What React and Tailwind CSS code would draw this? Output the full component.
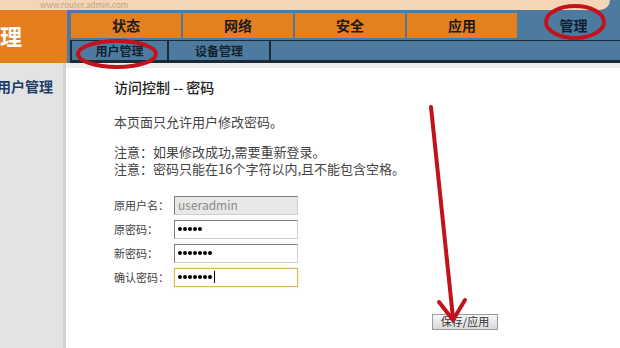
import React from "react";

const font = { fontFamily: '"Noto Sans CJK SC", "Noto Sans", sans-serif' };

const mainTabs = ["状态", "网络", "安全", "应用"];

const Field = ({ label, value, gray, focus }) => (
  <div className="flex items-center h-[24px]">
    <span className="w-[60px] text-[11px] text-[#444]">{label}</span>
    <div
      className={`w-[124px] h-[19px] flex items-center pl-[3px] border ${
        focus
          ? "border-[#d9b860] shadow-[0_0_2px_#f0d890]"
          : "border-t-[#7b7b7b] border-l-[#7b7b7b] border-r-[#cfcfcf] border-b-[#cfcfcf]"
      } ${gray ? "bg-[#e8e8e6]" : "bg-white"}`}
    >
      {gray ? (
        <span className="text-[12px] text-[#8a8a8a] leading-none">{value}</span>
      ) : (
        <span className="flex items-center gap-[1px]">
          {Array.from({ length: value }).map((_, i) => (
            <span key={i} className="w-[4px] h-[4px] rounded-full bg-black" />
          ))}
          {focus && <span className="w-px h-[12px] bg-black ml-[1px]" />}
        </span>
      )}
    </div>
  </div>
);

export default function App() {
  return (
    <div className="relative w-[620px] h-[348px] overflow-hidden bg-white" style={font}>
      {/* top banner strip */}
      <div className="h-[10px] bg-[#4d7ba0]">
        <div className="h-full w-[610px] bg-[#f4d6b6] rounded-br-[60px] pl-[40px] text-[8px] leading-[10px] text-[#c0a288]">
          www.router.admin.com
        </div>
      </div>

      {/* navigation */}
      <div className="flex h-[53px]">
        <div className="w-[67px] bg-[#e57e1f] flex items-center">
          <span className="text-white font-bold text-[22px] leading-none -mt-[4px]">理</span>
        </div>
        <div className="flex-1 bg-[#4d7ba0] pl-[4px] pt-[3px] flex flex-col">
          <div className="flex h-[25px] gap-[2px]">
            {mainTabs.map((t) => (
              <div
                key={t}
                className="w-[110px] bg-[#e5801f] flex items-center justify-center text-[14px] font-bold text-[#1b1b1b]"
              >
                {t}
              </div>
            ))}
            <div className="flex-1 flex items-center justify-center pl-[8px] text-[14px] font-bold text-[#10202e]">
              管理
            </div>
          </div>
          <div className="mt-[2px] h-[23px] flex border-t border-b-[3px] border-[#1c2a36] -ml-[1px]">
            <div className="w-[99px] border-x-[2px] border-[#1c2a36] flex items-center justify-center text-[12px] font-bold text-[#14202b]">
              用户管理
            </div>
            <div className="w-[102px] border-r-[2px] border-[#1c2a36] flex items-center justify-center text-[12px] font-bold text-[#14202b]">
              设备管理
            </div>
            <div className="flex-1" />
          </div>
        </div>
      </div>

      {/* body */}
      <div className="flex h-[285px]">
        <div className="w-[66px] bg-[#e3e3e3] border-r-[3px] border-[#d2d2d2] pt-[13px] overflow-hidden">
          <div className="-ml-[3px] text-[14px] font-bold text-[#1d3c66] whitespace-nowrap">用户管理</div>
        </div>
        <div className="flex-1 flex flex-col bg-white">
          <div className="h-[5px] bg-[#eeeeee]" />
          <div className="pl-[48px] pt-[9px] text-[#333]">
            <div className="text-[14px] font-medium text-[#222] leading-[20px]">访问控制 -- 密码</div>
            <div className="mt-[16px] text-[13px] leading-[18px] text-[#444]">本页面只允许用户修改密码。</div>
            <div className="mt-[13px] flex flex-col gap-[1px] text-[13px] leading-[16px] text-[#444]">
              <div>注意：如果修改成功,需要重新登录。</div>
              <div>注意：密码只能在16个字符以内,且不能包含空格。</div>
            </div>
            <div className="mt-[16px] flex flex-col">
              <Field label="原用户名：" value="useradmin" gray />
              <Field label="原密码：" value={5} />
              <Field label="新密码：" value={7} />
              <Field label="确认密码：" value={7} focus />
            </div>
            <div className="mt-[18px] pl-[318px]">
              <button className="h-[16px] w-[66px] border border-[#9a9a9a] bg-gradient-to-b from-[#f7f7f7] to-[#d9d9d9] text-[11px] leading-none text-[#333]">
                保存/应用
              </button>
            </div>
          </div>
        </div>
      </div>

      {/* annotations */}
      <svg className="absolute inset-0 pointer-events-none" width="620" height="348">
        <ellipse cx="575" cy="22" rx="29" ry="16" fill="none" stroke="#c2121b" strokeWidth="4" />
        <ellipse cx="117" cy="54" rx="39" ry="13" fill="none" stroke="#c2121b" strokeWidth="4" />
        <line x1="431" y1="107" x2="453" y2="318" stroke="#c2121b" strokeWidth="4" strokeLinecap="round" />
        <polyline points="439,302 453,320 465,300" fill="none" stroke="#c2121b" strokeWidth="4" strokeLinecap="round" strokeLinejoin="round" />
      </svg>
    </div>
  );
}
